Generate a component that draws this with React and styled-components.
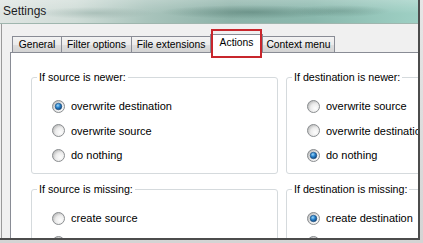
import { useId } from "react";
import styled, { createGlobalStyle } from "styled-components";

const GlobalStyle = createGlobalStyle`
  html, body { margin: 0; padding: 0; }
  body {
    width: 423px;
    height: 243px;
    overflow: hidden;
    background: #dedede;
    font-family: "Liberation Sans", Arial, sans-serif;
  }
`;

const groups = [
  {
    title: "If source is newer:",
    options: ["overwrite destination", "overwrite source", "do nothing"],
    checked: 0,
  },
  {
    title: "If destination is newer:",
    options: ["overwrite source", "overwrite destination", "do nothing"],
    checked: 2,
  },
  {
    title: "If source is missing:",
    options: ["create source", "delete destination", "do nothing"],
    checked: -1,
  },
  {
    title: "If destination is missing:",
    options: ["create destination", "delete source", "do nothing"],
    checked: 0,
  },
];

const tabs = [
  { label: "General", width: 50 },
  { label: "Filter options", width: 71 },
  { label: "File extensions", width: 80 },
  { label: "Actions", width: 53, active: true },
  { label: "Context menu", width: 73 },
];

const Radio = ({ checked }) => {
  const id = useId().replace(/:/g, "");
  return (
    <svg width="13" height="13" viewBox="0 0 13 13">
      <defs>
        <radialGradient id={`bg${id}`} cx="65%" cy="65%" r="70%">
          <stop offset="0%" stopColor="#fdfdfd" />
          <stop offset="55%" stopColor="#ececec" />
          <stop offset="100%" stopColor="#b9b9b9" />
        </radialGradient>
        <radialGradient id={`dot${id}`} cx="40%" cy="35%" r="70%">
          <stop offset="0%" stopColor="#9fd8f8" />
          <stop offset="45%" stopColor="#2c86d0" />
          <stop offset="100%" stopColor="#0c3b6e" />
        </radialGradient>
      </defs>
      <circle cx="6.5" cy="6.5" r="6" fill={`url(#bg${id})`} stroke="#8b8e91" strokeWidth="1" />
      {checked && (
        <circle cx="6.5" cy="6.5" r="3.3" fill={`url(#dot${id})`} stroke="#1a4b7c" strokeWidth="0.6" />
      )}
    </svg>
  );
};

const App = () => {
  return (
    <>
      <GlobalStyle />
      <Frame>
        <Window>
          <TitleBar>Settings</TitleBar>
          <Body>
            <TabStrip>
              {tabs.map((t) => (
                <Tab key={t.label} $width={t.width} $active={t.active}>
                  {t.label}
                </Tab>
              ))}
            </TabStrip>
            <Panel>
              {groups.map((g) => (
                <GroupBox key={g.title}>
                  <Legend>{g.title}</Legend>
                  <Options>
                    {g.options.map((o, i) => (
                      <Option key={o}>
                        <Radio checked={i === g.checked} />
                        {o}
                      </Option>
                    ))}
                  </Options>
                </GroupBox>
              ))}
            </Panel>
          </Body>
        </Window>
      </Frame>
    </>
  );
};

export default App;

const Frame = styled.div`
  width: 423px;
  height: 243px;
  background: linear-gradient(180deg, #e6e6e6, #d4d4d4);
`;

const Window = styled.div`
  width: 420px;
  height: 240px;
  box-sizing: border-box;
  border-right: 2px solid #4c4c4c;
  border-bottom: 2px solid #4c4c4c;
  display: flex;
  flex-direction: column;
  overflow: hidden;
  background: #f0f0f0;
`;

const TitleBar = styled.div`
  height: 24px;
  flex: none;
  box-sizing: border-box;
  display: flex;
  align-items: center;
  padding: 0 0 1px 3px;
  font-size: 12px;
  color: #1c211f;
  border-bottom: 1px solid #9fb6ae;
  background:
    radial-gradient(ellipse 60px 6px at 95px 13px, rgba(150, 175, 168, 0.55), transparent),
    radial-gradient(ellipse 90px 7px at 250px 12px, rgba(70, 110, 100, 0.45), transparent),
    radial-gradient(ellipse 50px 6px at 340px 11px, rgba(80, 120, 110, 0.35), transparent),
    linear-gradient(180deg, rgba(255, 255, 255, 0.25), rgba(255, 255, 255, 0) 60%),
    linear-gradient(90deg, #dfe5e2 0%, #cfdcd7 18%, #a9c4bc 35%, #8cb2a8 55%, #8ab8ad 75%, #9ed0c4 100%);
`;

const Body = styled.div`
  flex: 1;
  min-height: 0;
  display: flex;
  flex-direction: column;
  margin-left: 1px;
  border-left: 1px solid #9a9a9a;
  padding: 10px 0 0 8px;
  overflow: hidden;
`;

const TabStrip = styled.div`
  flex: none;
  height: 18px;
  display: flex;
  align-items: flex-end;
  padding-left: 2px;
  position: relative;
  z-index: 1;
`;

const Tab = styled.div`
  position: relative;
  box-sizing: border-box;
  width: ${(p) => p.$width}px;
  height: ${(p) => (p.$active ? 19 : 16)}px;
  margin-left: -1px;
  margin-bottom: ${(p) => (p.$active ? -1 : 0)}px;
  padding-bottom: ${(p) => (p.$active ? 3 : 0)}px;
  border: 1px solid #898c95;
  border-bottom: none;
  display: flex;
  align-items: center;
  justify-content: center;
  font-size: 10.3px;
  color: #000;
  white-space: nowrap;
  z-index: ${(p) => (p.$active ? 2 : 0)};
  background: ${(p) =>
    p.$active ? "#fff" : "linear-gradient(180deg, #f3f3f3 0%, #ebebeb 50%, #dedede 51%, #d3d3d3 100%)"};

  &:first-child {
    margin-left: 0;
  }

  ${(p) =>
    p.$active &&
    `
    &::after {
      content: "";
      position: absolute;
      left: 0;
      right: 0;
      top: -6px;
      bottom: -5px;
      border: 2px solid #c8262c;
    }
  `}
`;

const Panel = styled.div`
  flex: none;
  width: 440px;
  height: 300px;
  box-sizing: border-box;
  background: #fff;
  border: 1px solid #898c95;
  padding: 18px 0 0 20px;
  display: grid;
  grid-template-columns: 247px 170px;
  column-gap: 8px;
  row-gap: 9px;
  align-content: start;
`;

const GroupBox = styled.fieldset`
  margin: 0;
  min-width: 0;
  height: 103px;
  box-sizing: border-box;
  padding: 0 0 0 5px;
  border: 1px solid #d5dadd;
  border-radius: 3px;
`;

const Legend = styled.legend`
  padding: 0 2px;
  font-size: 10.7px;
  line-height: 13px;
  color: #000;
`;

const Options = styled.div`
  display: flex;
  flex-direction: column;
  gap: 10.5px;
  padding: 15px 0 0 15px;
`;

const Option = styled.label`
  display: flex;
  align-items: center;
  gap: 6px;
  height: 14px;
  font-size: 11px;
  color: #000;
  white-space: nowrap;
`;
